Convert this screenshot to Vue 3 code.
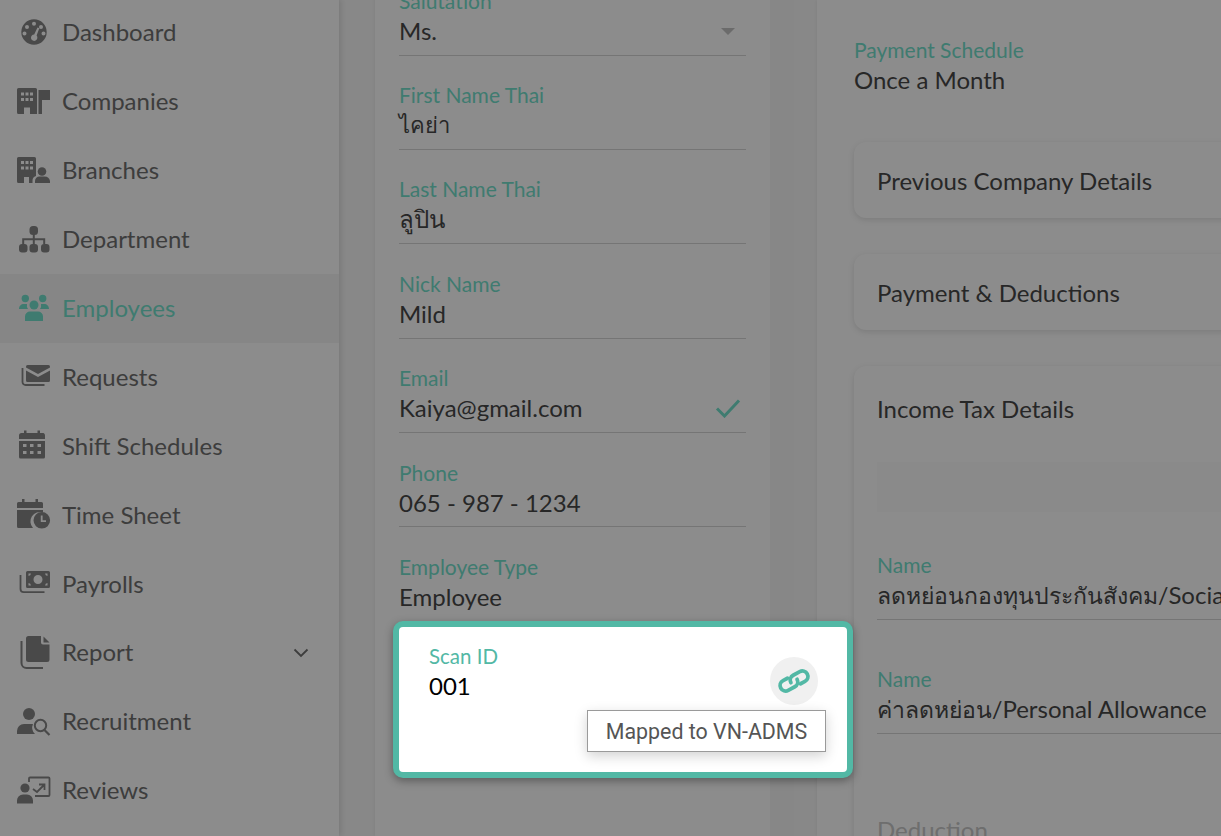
<script setup>
const nav = [
  { id: 'dash', label: 'Dashboard' },
  { id: 'comp', label: 'Companies' },
  { id: 'branch', label: 'Branches' },
  { id: 'dept', label: 'Department' },
  { id: 'emp', label: 'Employees', active: true },
  { id: 'req', label: 'Requests' },
  { id: 'shift', label: 'Shift Schedules' },
  { id: 'time', label: 'Time Sheet' },
  { id: 'pay', label: 'Payrolls' },
  { id: 'report', label: 'Report', more: true },
  { id: 'recruit', label: 'Recruitment' },
  { id: 'review', label: 'Reviews' },
]
const fields = [
  { label: 'First Name Thai', value: 'ไคย่า', thai: true },
  { label: 'Last Name Thai', value: 'ลูปิน' },
  { label: 'Nick Name', value: 'Mild' },
  { label: 'Email', value: 'Kaiya@gmail.com', check: true },
  { label: 'Phone', value: '065 - 987 - 1234' },
]
</script>

<template>
  <div class="page">
    <aside class="sidebar">
      <div v-for="item in nav" :key="item.id" class="nav-item" :class="{ active: item.active }">
        <svg class="nav-icon" viewBox="0 0 34 34" fill="currentColor">
          <g v-if="item.id === 'dash'">
            <path fill-rule="evenodd" d="M17 3.300a12.700 12.700 0 1 1 0 25.400a12.700 12.700 0 0 1 0-25.400ZM17 5.800a2 2 0 1 0 0 4a2 2 0 0 0 0-4ZM10 9a2 2 0 1 0 0 4a2 2 0 0 0 0-4ZM7.500 15.500a2 2 0 1 0 0 4a2 2 0 0 0 0-4ZM24 9a2 2 0 1 0 0 4a2 2 0 0 0 0-4ZM26.500 15.500a2 2 0 1 0 0 4a2 2 0 0 0 0-4ZM20.500 11.500L17.200 18.500a3.200 3.200 0 1 0 2.400 1.100L22.300 12.300Z" />
          </g>
          <g v-else-if="item.id === 'comp'">
            <path fill-rule="evenodd" d="M1.500 3h17a1.500 1.500 0 0 1 1.500 1.500V29h-7v-6.500h-6V29H1.500A1.500 1.500 0 0 1 0 27.500V4.500A1.500 1.500 0 0 1 1.500 3ZM4 7.500v3h3v-3ZM8.500 7.500v3h3v-3ZM13 7.500v3h3v-3ZM4 13v3h3v-3ZM8.500 13v3h3v-3ZM13 13v3h3v-3Z" />
            <path d="M21.500 5H33v10h-8v14h-3.500Z" />
          </g>
          <g v-else-if="item.id === 'branch'">
            <path fill-rule="evenodd" d="M1.500 3h16a1.500 1.500 0 0 1 1.500 1.500V22a5 5 0 0 0-3.500 5v2H12v-6H7v6H1.500A1.500 1.500 0 0 1 0 27.500V4.500A1.500 1.500 0 0 1 1.500 3ZM4 7v3h3V7ZM8.500 7v3h3V7ZM13 7v3h3V7ZM4 12.500v3h3v-3ZM8.500 12.500v3h3v-3ZM13 12.500v3h3v-3Z" />
            <circle cx="25" cy="17.500" r="4.300" />
            <path d="M18 29v-2a4.500 4.500 0 0 1 4.500-4.500h5A5.500 5.500 0 0 1 33 27v2Z" />
          </g>
          <g v-else-if="item.id === 'dept'">
            <rect x="12.500" y="3" width="8.500" height="9" rx="3.500" />
            <rect x="2" y="21" width="8.500" height="8.500" rx="3" />
            <rect x="12.500" y="21" width="8.500" height="8.500" rx="3" />
            <rect x="24" y="21" width="8.500" height="8.500" rx="3" />
            <path d="M15.800 12h2v3.200H28.200v5.800h-2v-3.800h-8.400v3.800h-2v-3.800H7.200v3.800h-2v-5.800h10.600Z" />
          </g>
          <g v-else-if="item.id === 'emp'">
            <circle cx="8.300" cy="6.500" r="3.700" />
            <circle cx="25.700" cy="6.500" r="3.700" />
            <circle cx="17" cy="13" r="4.500" />
            <path d="M2 17c0-3 2-5 5-5h3a6.500 6.500 0 0 0 1 5ZM32 17c0-3-2-5-5-5h-3a6.500 6.500 0 0 1-1 5Z" />
            <path d="M8 29v-4.500a5 5 0 0 1 5-5h8a5 5 0 0 1 5 5V29Z" />
          </g>
          <g v-else-if="item.id === 'req'">
            <path d="M10.500 5h21a1.500 1.500 0 0 1 1.500 1.500v1L21 14L9 7.500v-1A1.500 1.500 0 0 1 10.500 5Z" />
            <path d="M9 10.500l12 6.500l12-6.500V20.500A1.500 1.500 0 0 1 31.500 22h-21A1.500 1.500 0 0 1 9 20.500Z" />
            <path d="M5.500 8v14a3 3 0 0 0 3 3H27.500" fill="none" stroke="currentColor" stroke-width="1.800" />
          </g>
          <g v-else-if="item.id === 'shift'">
            <path fill-rule="evenodd" d="M7 1.500h2.500V4h11V1.500H23V4h3.500A2.500 2.500 0 0 1 28 6.500V10H2V6.500A2.500 2.500 0 0 1 4.500 4H7ZM2 12h26v16a1.500 1.500 0 0 1-1.500 1.500h-23A1.500 1.500 0 0 1 2 28ZM6 15v3h3.500v-3ZM13 15v3h3.500v-3ZM20.500 15v3H24v-3ZM6 22v3h3.500v-3ZM13 22v3h3.500v-3ZM20.500 22v3H24v-3Z" />
          </g>
          <g v-else-if="item.id === 'time'">
            <path d="M5 1h2.500v3h11V1H21v3h3.500A1.500 1.500 0 0 1 26 5.500V10H0V5.500A1.500 1.500 0 0 1 1.500 4H5Z" />
            <path d="M0 12h26v2.500a9.500 9.500 0 0 0-10 15.500H1.500A1.500 1.500 0 0 1 0 28.500Z" />
            <path fill-rule="evenodd" d="M24.800 14a8.300 8.300 0 1 1 0 16.600a8.300 8.300 0 0 1 0-16.600ZM23.800 17.500v6.500H29v-1.800h-3.400v-4.700Z" />
          </g>
          <g v-else-if="item.id === 'pay'">
            <path fill-rule="evenodd" d="M11 4h20.500A1.500 1.500 0 0 1 33 5.500V19.500A1.500 1.500 0 0 1 31.500 21h-21A1.500 1.500 0 0 1 9 19.500V5.500A1.500 1.500 0 0 1 10.500 4ZM21 8a4.500 4.500 0 1 0 0 9a4.500 4.500 0 0 0 0-9ZM11.500 6.500v2.500a3 3 0 0 0 2.500-2.500ZM28 6.500a3 3 0 0 0 2.500 2.500V6.500ZM11.500 16v2.500H14a3 3 0 0 0-2.500-2.500ZM30.500 16A3 3 0 0 0 28 18.500h2.500Z" />
            <path d="M3.500 8v14a3.200 3.200 0 0 0 3.200 3.200H27.500" fill="none" stroke="currentColor" stroke-width="1.800" />
          </g>
          <g v-else-if="item.id === 'report'">
            <path d="M11.500 0H24v6.500a2 2 0 0 0 2 2h6.500V23.500a2.500 2.500 0 0 1-2.500 2.500H11.500A2.500 2.500 0 0 1 9 23.500V2.500A2.500 2.500 0 0 1 11.500 0Z" />
            <path d="M26.500 .5l6 6h-6Z" />
            <path d="M4.500 5v22a5 5 0 0 0 5 5H26" fill="none" stroke="currentColor" stroke-width="2" />
          </g>
          <g v-else-if="item.id === 'recruit'">
            <circle cx="12" cy="9" r="6" />
            <path d="M0 29v-3a7 7 0 0 1 7-7h9a9 9 0 0 0 2 10Z" />
            <circle cx="23.500" cy="20.500" r="5.700" fill="none" stroke="currentColor" stroke-width="2" />
            <path d="M27.500 25l5 5" fill="none" stroke="currentColor" stroke-width="2.200" />
          </g>
          <g v-else-if="item.id === 'review'">
            <circle cx="8" cy="14" r="4.600" />
            <path d="M0 29.500v-3a6 6 0 0 1 6-6h4a6 6 0 0 1 6 6v3Z" />
            <path d="M12 8V4.500a1 1 0 0 1 1-1h18.500a1 1 0 0 1 1 1V21a1 1 0 0 1-1 1H18" fill="none" stroke="currentColor" stroke-width="1.800" />
            <path d="M16 15l4 3l7-7M22 10.500h5.500V16" fill="none" stroke="currentColor" stroke-width="1.800" />
          </g>
        </svg>
        <span class="nav-label">{{ item.label }}</span>
        <svg v-if="item.more" class="chevron" viewBox="0 0 16 10"><path d="M1.500 1.500L8 8l6.500-6.500" fill="none" stroke="currentColor" stroke-width="1.800" /></svg>
      </div>
    </aside>

    <main class="content">
      <section class="form-card">
        <div class="field first">
          <div class="label">Salutation</div>
          <div class="value-row">
            <span class="value">Ms.</span>
            <i class="caret"></i>
          </div>
        </div>
        <div v-for="f in fields" :key="f.label" class="field">
          <div class="label">{{ f.label }}</div>
          <div class="value-row">
            <span class="value" :class="{ thai: f.thai }">{{ f.value }}</span>
            <svg v-if="f.check" class="check" viewBox="0 0 26 20"><path d="M2 10.500l7.500 7.500L24 2.500" fill="none" stroke="currentColor" stroke-width="3" /></svg>
          </div>
        </div>
        <div class="field plain">
          <div class="label">Employee Type</div>
          <div class="value-row"><span class="value">Employee</span></div>
        </div>
      </section>

      <div class="strip"></div>

      <section class="detail-card">
        <div class="schedule">
          <div class="label">Payment Schedule</div>
          <div class="value">Once a Month</div>
        </div>
        <div class="panel">Previous Company Details</div>
        <div class="panel">Payment &amp; Deductions</div>
        <div class="panel tall">
          <div class="panel-title">Income Tax Details</div>
          <div class="shade"></div>
          <div class="tax-field">
            <div class="label">Name</div>
            <div class="value nowrap"><span class="thai-run">ลดหย่อนกองทุนประกันสังคม/</span>Social Security Fund</div>
          </div>
          <div class="tax-field">
            <div class="label">Name</div>
            <div class="value nowrap"><span class="thai-run">ค่าลดหย่อน/</span>Personal Allowance</div>
          </div>
          <div class="muted">Deduction</div>
        </div>
      </section>
    </main>

    <div class="scrim"></div>

    <div class="focus-card">
      <div class="scan-label">Scan ID</div>
      <div class="scan-value">001</div>
      <span class="link-btn">
        <svg viewBox="0 0 34 34" width="34" height="34"><g transform="rotate(-28 17 17)" fill="none" stroke="currentColor" stroke-width="3.800" stroke-linecap="round"><path d="M12.500 11.500H7.500a5.500 5.500 0 0 0 0 11H15a5.500 5.500 0 0 0 5.500-5.500" /><path d="M21.500 22.500H26.500a5.500 5.500 0 0 0 0-11H19a5.500 5.500 0 0 0-5.500 5.500" /></g></svg>
      </span>
      <div class="tooltip">Mapped to VN-ADMS</div>
    </div>
  </div>
</template>

<style>
html, body { margin: 0; padding: 0; overflow: hidden; }
</style>

<style scoped>
.page {
  position: relative;
  width: 1221px;
  height: 836px;
  overflow: hidden;
  display: flex;
  background: #f8f8f8;
  font-family: Lato, "Noto Sans", "Liberation Sans", sans-serif;
  font-size: 24px;
  color: #484848;
}
.sidebar {
  width: 339px;
  flex: none;
  margin-top: -1.500px;
  background: #fff;
  box-shadow: 2px 0 6px rgba(0, 0, 0, .12);
}
.nav-item {
  height: 68.900px;
  display: flex;
  align-items: center;
  padding: 0 30px 0 17px;
  color: #6f6f6f;
  box-sizing: border-box;
}
.nav-item.active { background: #f5f5f5; color: #73e1cc; }
.nav-icon { width: 34px; height: 34px; flex: none; color: #868686; }
.active .nav-icon { color: #73e1cc; }
.nav-label { margin-left: 11px; margin-bottom: 2px; flex: 1; }
.chevron { width: 16px; height: 10px; color: #6f6f6f; }

.content { flex: 1; display: flex; padding-left: 36px; min-width: 0; }
.form-card {
  width: 395px;
  flex: none;
  box-sizing: border-box;
  padding: 0 24px;
  background: #fff;
  box-shadow: 0 0 4px rgba(0, 0, 0, .08);
  margin-top: -20px;
}
.field { height: 94.400px; box-sizing: border-box; padding-top: 27.600px; border-bottom: 1px solid #d6d6d6; }
.field.first { height: 75.500px; padding-top: 9px; }
.field.plain { border-bottom: 0; }
.label { color: #73e1cc; font-size: 21px; line-height: 24px; }
.muted { color: #c8c8c8; margin-top: 31px; line-height: 36px; }
.value { font-size: 24px; line-height: 36px; }
.thai { font-size: 22px; }
.thai-run { font-size: 23px; }
.nowrap { white-space: nowrap; }
.value-row { display: flex; align-items: center; justify-content: space-between; }
.caret {
  width: 0; height: 0;
  margin-right: 11px;
  border-left: 7px solid transparent;
  border-right: 7px solid transparent;
  border-top: 7px solid #c4c4c4;
}
.check { width: 26px; height: 20px; color: #73e1cc; margin-right: 5px; }

.strip {
  width: 24px;
  flex: none;
  background: #f6f6f6;
}
.detail-card {
  flex: 1;
  min-width: 0;
  margin-left: 23px;
  padding-left: 37px;
  background: #fff;
  box-shadow: 0 0 4px rgba(0, 0, 0, .08);
}
.schedule { padding-top: 38px; height: 142px; box-sizing: border-box; }
.panel {
  width: 520px;
  height: 76px;
  margin-bottom: 36px;
  box-sizing: border-box;
  padding: 21px 23px;
  line-height: 36px;
  border-radius: 12px;
  background: #fff;
  box-shadow: 0 2px 6px rgba(0, 0, 0, .12);
}
.panel.tall { height: 600px; padding-top: 25px; }
.panel-title { margin-bottom: 35px; }
.shade { height: 50px; background: #fcfcfc; margin-right: -23px; margin-bottom: 41px; }
.tax-field { height: 114px; box-sizing: border-box; }
.tax-field .value { border-bottom: 1px solid #d6d6d6; padding-bottom: 6px; }

.scrim { position: absolute; inset: 0; background: rgba(0, 0, 0, .45); }

.focus-card {
  position: absolute;
  left: 393px;
  top: 621px;
  width: 460px;
  height: 157px;
  box-sizing: border-box;
  border: 6px solid #52b8a5;
  border-radius: 10px;
  background: #fff;
  box-shadow: 0 3px 8px rgba(0, 0, 0, .35);
}
.scan-label { position: absolute; left: 30px; top: 17px; color: #52b8a5; font-size: 20.500px; line-height: 24px; }
.scan-value { position: absolute; left: 30px; top: 41px; color: #000; font-size: 24px; line-height: 36px; }
.link-btn {
  position: absolute;
  left: 371px;
  top: 30px;
  width: 48px;
  height: 48px;
  border-radius: 50%;
  background: #f0f0f0;
  color: #52b8a5;
  display: flex;
  align-items: center;
  justify-content: center;
}
.tooltip {
  position: absolute;
  left: 188px;
  top: 83px;
  width: 239px;
  height: 42px;
  box-sizing: border-box;
  border: 1px solid #9a9a9a;
  background: #fff;
  color: #555;
  font-family: Roboto, sans-serif;
  font-size: 21.400px;
  line-height: 42px;
  text-align: center;
  box-shadow: 0 4px 12px rgba(0, 0, 0, .18);
}
</style>
